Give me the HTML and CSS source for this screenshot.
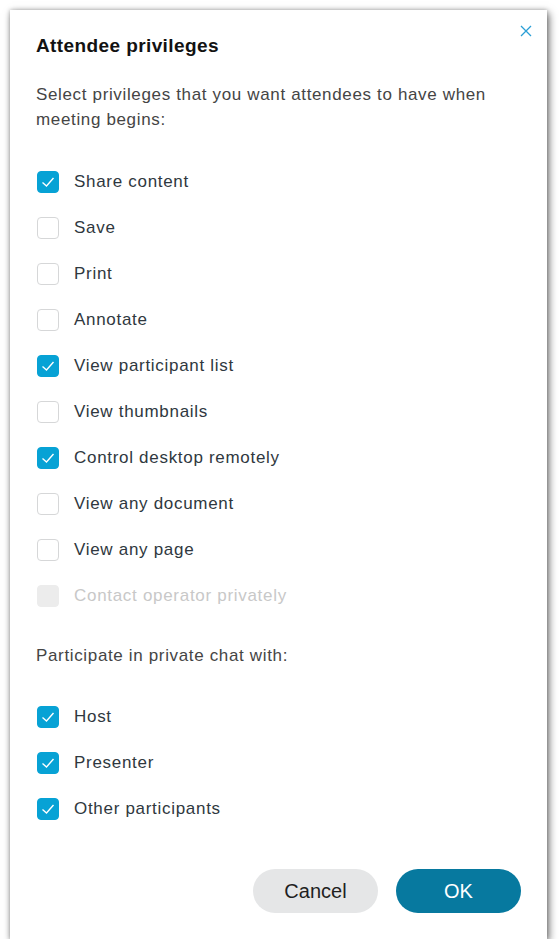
FILE: index.html
```html
<!DOCTYPE html>
<html>
<head>
<meta charset="utf-8">
<link rel="stylesheet" href="styles.css">
</head>
<body>
<div class="dialog">
  <button class="close" aria-label="Close">
    <svg width="12" height="12" viewBox="0 0 12 12"><path d="M1 1L11 11M11 1L1 11" stroke="#2a9fd6" stroke-width="1.3" fill="none"/></svg>
  </button>
  <h1 class="title">Attendee privileges</h1>
  <p class="desc">Select privileges that you want attendees to have when meeting begins:</p>
  <div class="list">
    <label class="row"><span class="box on"><svg viewBox="0 0 20 20"><path d="M4.5 10.5L8.5 14L15.5 6" stroke="#fff" stroke-width="1.4" fill="none"/></svg></span><span class="lbl">Share content</span></label>
    <label class="row"><span class="box"></span><span class="lbl">Save</span></label>
    <label class="row"><span class="box"></span><span class="lbl">Print</span></label>
    <label class="row"><span class="box"></span><span class="lbl">Annotate</span></label>
    <label class="row"><span class="box on"><svg viewBox="0 0 20 20"><path d="M4.5 10.5L8.5 14L15.5 6" stroke="#fff" stroke-width="1.4" fill="none"/></svg></span><span class="lbl">View participant list</span></label>
    <label class="row"><span class="box"></span><span class="lbl">View thumbnails</span></label>
    <label class="row"><span class="box on"><svg viewBox="0 0 20 20"><path d="M4.5 10.5L8.5 14L15.5 6" stroke="#fff" stroke-width="1.4" fill="none"/></svg></span><span class="lbl">Control desktop remotely</span></label>
    <label class="row"><span class="box"></span><span class="lbl">View any document</span></label>
    <label class="row"><span class="box"></span><span class="lbl">View any page</span></label>
    <label class="row disabled"><span class="box dis"></span><span class="lbl">Contact operator privately</span></label>
  </div>
  <p class="desc sub">Participate in private chat with:</p>
  <div class="list second">
    <label class="row"><span class="box on"><svg viewBox="0 0 20 20"><path d="M4.5 10.5L8.5 14L15.5 6" stroke="#fff" stroke-width="1.4" fill="none"/></svg></span><span class="lbl">Host</span></label>
    <label class="row"><span class="box on"><svg viewBox="0 0 20 20"><path d="M4.5 10.5L8.5 14L15.5 6" stroke="#fff" stroke-width="1.4" fill="none"/></svg></span><span class="lbl">Presenter</span></label>
    <label class="row"><span class="box on"><svg viewBox="0 0 20 20"><path d="M4.5 10.5L8.5 14L15.5 6" stroke="#fff" stroke-width="1.4" fill="none"/></svg></span><span class="lbl">Other participants</span></label>
  </div>
  <div class="actions">
    <button class="btn cancel">Cancel</button>
    <button class="btn ok">OK</button>
  </div>
</div>
</body>
</html>
```

FILE: styles.css
```css
* { box-sizing: border-box; }
html, body { margin: 0; padding: 0; background: #ffffff; }
body {
  padding: 10px 0 0 10px;
  font-family: "Liberation Sans", Arial, sans-serif;
}
.dialog {
  position: relative;
  width: 537px;
  height: 929px;
  background: #fff;
  box-shadow: 2px 3px 8px rgba(0,0,0,0.55), 0 0 4px rgba(0,0,0,0.25);
  padding: 24px 26px 26px 26px;
  display: flex;
  flex-direction: column;
}
.close {
  position: absolute;
  top: 15px;
  right: 15px;
  width: 12px;
  height: 12px;
  padding: 0;
  border: 0;
  background: none;
  display: block;
}
.close svg { display: block; }
.title {
  margin: 0;
  font-size: 19px;
  line-height: 24px;
  font-weight: bold;
  letter-spacing: 0.4px;
  color: #121212;
}
.desc {
  margin: 24px 0 0 0;
  font-size: 17px;
  line-height: 25px;
  letter-spacing: 0.65px;
  color: #454545;
}
.desc.sub { margin-top: 24px; }
.list {
  margin-top: 27px;
  display: flex;
  flex-direction: column;
}
.list.second { margin-top: 26px; }
.row {
  height: 46px;
  display: flex;
  align-items: center;
  gap: 15px;
  margin-left: 1px;
}
.box {
  width: 22px;
  height: 22px;
  border-radius: 4px;
  border: 1px solid #d6d7d8;
  background: #fff;
  flex: none;
}
.box.on {
  background: #07a2d5;
  border-color: #07a2d5;
}
.box.on svg { display: block; width: 20px; height: 20px; }
.box.dis {
  background: #ececec;
  border-color: #ececec;
}
.lbl {
  font-size: 17px;
  letter-spacing: 0.7px;
  color: #2f3840;
}
.disabled .lbl { color: #c8c8c8; }
.actions {
  margin-top: auto;
  display: flex;
  justify-content: flex-end;
  gap: 18px;
}
.btn {
  width: 125px;
  height: 44px;
  border-radius: 22px;
  border: 0;
  font-family: "Liberation Sans", Arial, sans-serif;
  font-size: 20px;
}
.cancel { background: #e5e6e7; color: #1f1f1f; }
.ok { background: #07799f; color: #fff; }
```
